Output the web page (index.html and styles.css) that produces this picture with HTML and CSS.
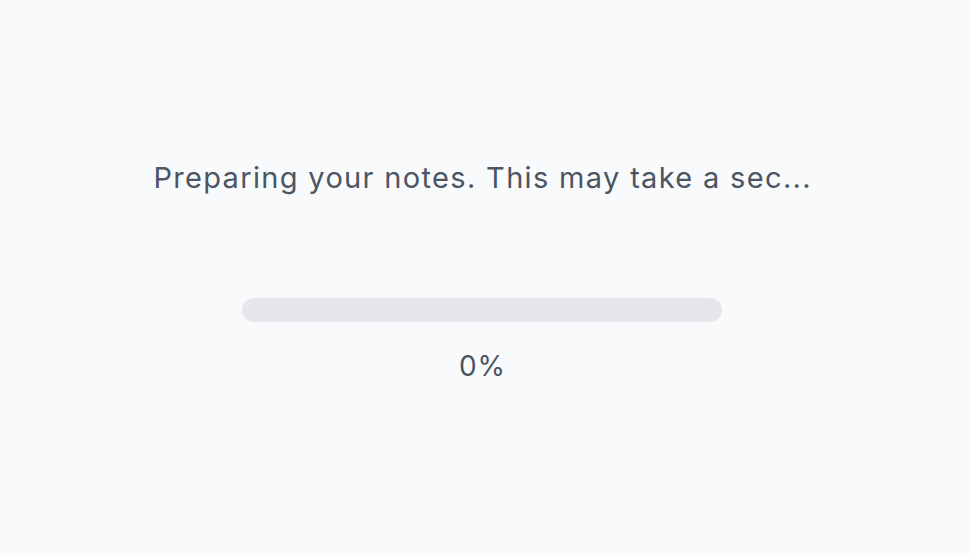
FILE: index.html
```html
<!DOCTYPE html>
<html lang="en">
<head>
<meta charset="utf-8">
<title>Preparing</title>
<link rel="stylesheet" href="styles.css">
</head>
<body>
<main class="screen">
  <p class="message">Preparing your notes. This may take a sec...</p>
  <div class="progress">
    <div class="progress-track"><div class="progress-fill" style="width:0%"></div></div>
    <div class="progress-label">0%</div>
  </div>
</main>
</body>
</html>
```
FILE: styles.css
```css
html, body {
  margin: 0;
  padding: 0;
  background: #f9fafb;
  height: 100%;
}
body {
  font-family: Inter, "Noto Sans", sans-serif;
  color: #4b5563;
}
.screen {
  box-sizing: border-box;
  height: 556px;
  padding-top: 160px;
  padding-right: 6px;
  display: flex;
  flex-direction: column;
  align-items: center;
}
.message {
  margin: 0;
  font-size: 29px;
  line-height: 36px;
  letter-spacing: 1.33px;
  text-indent: 1.33px;
}
.progress {
  margin-top: 102px;
  display: flex;
  flex-direction: column;
  align-items: center;
  gap: 28px;
}
.progress-track {
  width: 480px;
  height: 24px;
  border-radius: 12px;
  background: #e5e7eb;
  overflow: hidden;
}
.progress-fill {
  height: 100%;
  background: #3b82f6;
}
.progress-label {
  font-size: 28px;
  line-height: 32px;
  letter-spacing: 1px;
  text-indent: 1px;
}
```
